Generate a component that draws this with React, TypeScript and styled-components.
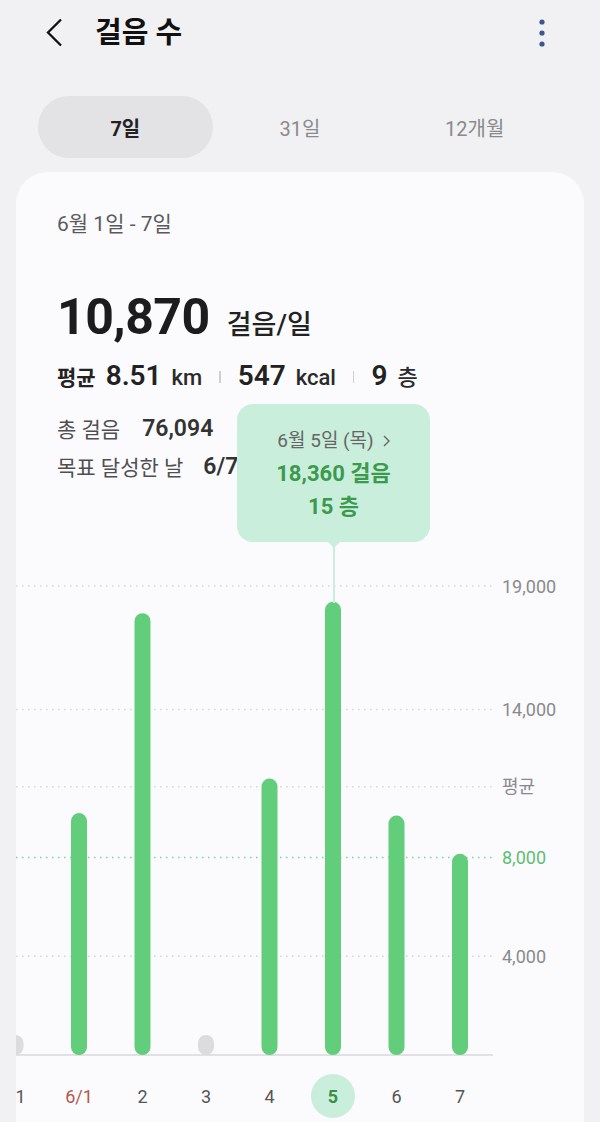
import React from 'react';
import styled, {createGlobalStyle} from 'styled-components';

const FONT = '"Roboto", "Noto Sans CJK KR", sans-serif';

const GlobalStyle = createGlobalStyle`
  html, body {
    margin: 0;
    padding: 0;
    background: #f1f1f3;
    font-family: ${FONT};
  }
`;

const Page = styled.div`
  width: 600px;
  height: 1122px;
  background: #f1f1f3;
  display: flex;
  flex-direction: column;
  overflow: hidden;
  color: #1d1d1f;
`;

const Header = styled.header`
  height: 66px;
  display: flex;
  align-items: center;
  padding: 0 55px 0 45px;
  flex-shrink: 0;
`;

const Title = styled.h1`
  margin: 0 0 0 30px;
  font-size: 29px;
  font-weight: 700;
  color: #111;
  line-height: 36px;
`;

const Kebab = styled.svg`
  margin-left: auto;
`;

const Tabs = styled.nav`
  margin: 30px 38px 0;
  display: grid;
  grid-template-columns: repeat(3, 1fr);
  height: 62px;
  flex-shrink: 0;
`;

const Tab = styled.div<{$active?: boolean}>`
  display: flex;
  align-items: center;
  justify-content: center;
  border-radius: 31px;
  font-size: 20px;
  font-weight: ${p => (p.$active ? 700 : 400)};
  color: ${p => (p.$active ? '#222' : '#8a8a8c')};
  background: ${p => (p.$active ? '#e3e3e6' : 'transparent')};
`;

const Card = styled.section`
  position: relative;
  flex: 1;
  margin: 14px 16px 0;
  padding-top: 39px;
  background: #fbfbfd;
  border-radius: 32px 32px 0 0;
  overflow: hidden;
`;

const Summary = styled.div`
  padding-left: 41px;
`;

const DateRange = styled.div`
  font-size: 21px;
  line-height: 26px;
  color: #5a5a5c;
`;

const BigRow = styled.div`
  margin-top: 50px;
  height: 60px;
  display: flex;
  align-items: baseline;
  gap: 17px;
`;

const BigNumber = styled.span`
  font-size: 50px;
  line-height: 60px;
  font-weight: 700;
  letter-spacing: -0.5px;
  color: #1c1c1e;
`;

const BigUnit = styled.span`
  font-size: 27px;
  line-height: 30px;
  font-weight: 500;
  color: #222;
`;

const StatsRow = styled.div`
  margin-top: 10px;
  height: 36px;
  display: flex;
  align-items: center;
`;

const Stat = styled.div`
  display: flex;
  align-items: baseline;
  gap: 10px;
`;

const StatLabel = styled.span`
  font-size: 21px;
  font-weight: 700;
  color: #222;
`;

const StatValue = styled.span`
  font-size: 28px;
  font-weight: 600;
  color: #222;
`;

const StatUnit = styled.span`
  font-size: 22px;
  font-weight: 500;
  color: #2a2a2a;
`;

const Divider = styled.span`
  width: 1.5px;
  height: 12px;
  margin: 4px 17px 0;
  background: #cfcfd2;
`;

const InfoRow = styled.div<{$gap: number; $top: number}>`
  margin-top: ${p => p.$top}px;
  height: 30px;
  display: flex;
  align-items: center;
  gap: ${p => p.$gap}px;
`;

const InfoLabel = styled.span`
  font-size: 21px;
  color: #4f4f52;
`;

const InfoValue = styled.span`
  font-size: 23px;
  font-weight: 600;
  color: #333;
`;

const Tooltip = styled.div`
  position: absolute;
  left: 221px;
  top: 232px;
  width: 193px;
  height: 138px;
  box-sizing: border-box;
  padding-top: 20px;
  border-radius: 16px;
  background: #c9eedb;
  text-align: center;
  line-height: 33px;

  &::before {
    content: '';
    position: absolute;
    left: 50%;
    bottom: -6px;
    margin-left: -6px;
    border-left: 6px solid transparent;
    border-right: 6px solid transparent;
    border-top: 6px solid #c9eedb;
  }

  &::after {
    content: '';
    position: absolute;
    left: 50%;
    top: 138px;
    width: 2px;
    margin-left: -1px;
    height: 61px;
    background: #c9eedb;
  }
`;

const TipDate = styled.div`
  font-size: 19px;
  color: #666;
  display: flex;
  align-items: center;
  justify-content: center;
  gap: 9px;
`;

const TipValue = styled.div`
  font-size: 22px;
  font-weight: 700;
  color: #3b9a4e;
`;

const Chart = styled.svg`
  display: block;
  margin-top: 79px;
  font-family: ${FONT};
`;

const BASE = 495;
const SCALE = (BASE - 26) / 19000;
const yOf = (v: number) => BASE - v * SCALE;

interface Day {
  label: string;
  value: number | null;
  color?: string;
  selected?: boolean;
}

const DAYS: Day[] = [
  {label: '31', value: null},
  {label: '6/1', value: 9800, color: '#b5574b'},
  {label: '2', value: 17900},
  {label: '3', value: null},
  {label: '4', value: 11200},
  {label: '5', value: 18360, selected: true},
  {label: '6', value: 9700},
  {label: '7', value: 8150}
];

const GRID = [
  {y: yOf(19000), label: '19,000'},
  {y: yOf(14000), label: '14,000'},
  {y: yOf(10870), label: '평균'},
  {y: yOf(8000), label: '8,000', goal: true},
  {y: yOf(4000), label: '4,000'}
];

const StepsChart = () => (
  <Chart width={568} height={562}>
    {GRID.map(g => (
      <g key={g.label}>
        <line
          x1={0}
          x2={477}
          y1={g.y}
          y2={g.y}
          stroke={g.goal ? '#7fd29b' : '#d6d6da'}
          strokeWidth={1.5}
          strokeDasharray="1.5 4.5"
        />
        <text
          x={486}
          y={g.y}
          dominantBaseline="central"
          fontSize={18}
          fill={g.goal ? '#5bbf72' : '#8a8a8c'}
        >
          {g.label}
        </text>
      </g>
    ))}
    <line x1={0} x2={477} y1={BASE} y2={BASE} stroke="#d9d9dc" strokeWidth={1.5} />
    {DAYS.map((d, i) => {
      const cx = -0.5 + i * 63.5;
      const top = d.value === null ? BASE - 20 : yOf(d.value);
      return (
        <g key={d.label}>
          <rect
            x={cx - 8}
            y={top}
            width={16}
            height={BASE - top}
            rx={8}
            fill={d.value === null ? '#dcdcde' : '#62cd7a'}
          />
          {d.selected && <circle cx={cx} cy={536} r={22} fill="#c9eedb" />}
          <text
            x={cx}
            y={536}
            textAnchor="middle"
            dominantBaseline="central"
            fontSize={18}
            fontWeight={d.selected ? 700 : 400}
            fill={d.selected ? '#3b8f48' : d.color || '#555'}
          >
            {d.label}
          </text>
        </g>
      );
    })}
  </Chart>
);

const App = () => (
  <>
    <GlobalStyle />
    <Page>
      <Header>
        <svg width={20} height={30} viewBox="0 0 20 30">
          <path d="M16 1.5 L3 14.5 L16 27.5" fill="none" stroke="#111" strokeWidth={2.3} />
        </svg>
        <Title>걸음 수</Title>
        <Kebab width={6} height={28} viewBox="0 0 6 28">
          <circle cx={3} cy={3} r={2.6} fill="#3a5888" />
          <circle cx={3} cy={14} r={2.6} fill="#3a5888" />
          <circle cx={3} cy={25} r={2.6} fill="#3a5888" />
        </Kebab>
      </Header>
      <Tabs>
        <Tab $active>7일</Tab>
        <Tab>31일</Tab>
        <Tab>12개월</Tab>
      </Tabs>
      <Card>
        <Summary>
          <DateRange>6월 1일 - 7일</DateRange>
          <BigRow>
            <BigNumber>10,870</BigNumber>
            <BigUnit>걸음/일</BigUnit>
          </BigRow>
          <StatsRow>
            <Stat>
              <StatLabel>평균</StatLabel>
              <StatValue>8.51</StatValue>
              <StatUnit>km</StatUnit>
            </Stat>
            <Divider />
            <Stat>
              <StatValue>547</StatValue>
              <StatUnit>kcal</StatUnit>
            </Stat>
            <Divider />
            <Stat>
              <StatValue>9</StatValue>
              <StatUnit>층</StatUnit>
            </Stat>
          </StatsRow>
          <InfoRow $top={20} $gap={22}>
            <InfoLabel>총 걸음</InfoLabel>
            <InfoValue>76,094</InfoValue>
          </InfoRow>
          <InfoRow $top={8} $gap={20}>
            <InfoLabel>목표 달성한 날</InfoLabel>
            <InfoValue>6/7</InfoValue>
          </InfoRow>
        </Summary>
        <Tooltip>
          <TipDate>
            6월 5일 (목)
            <svg width={7} height={12} viewBox="0 0 7 12">
              <path d="M1 1 L6 6 L1 11" fill="none" stroke="#666" strokeWidth={1.4} />
            </svg>
          </TipDate>
          <TipValue>18,360 걸음</TipValue>
          <TipValue>15 층</TipValue>
        </Tooltip>
        <StepsChart />
      </Card>
    </Page>
  </>
);

export default App;
